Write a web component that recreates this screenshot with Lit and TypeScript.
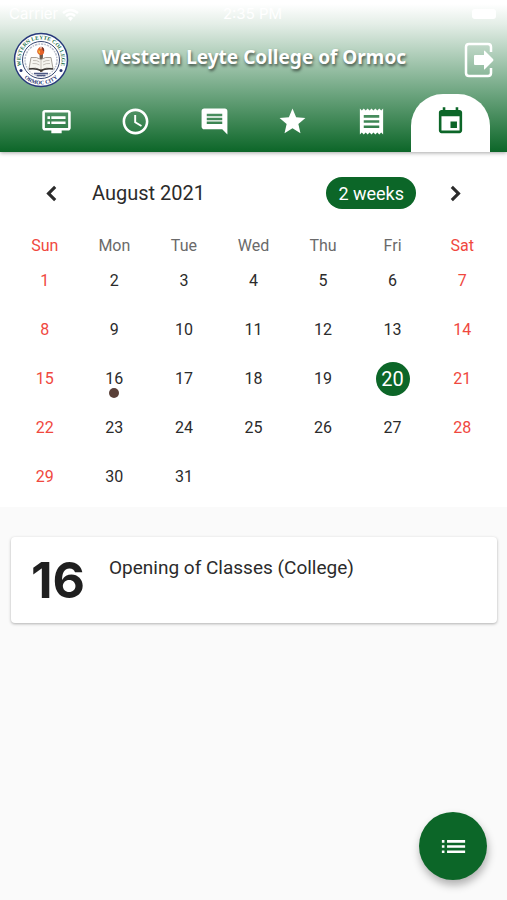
import { LitElement, html, css, svg } from "lit";
import { customElement, property, state } from "lit/decorators.js";
import { classMap } from "lit/directives/class-map.js";

const PATHS: Record<string, string> = {
  dvr: "M21 3H3c-1.1 0-2 .9-2 2v12c0 1.1.9 2 2 2h5v2h8v-2h5c1.1 0 1.99-.9 1.99-2L23 5c0-1.1-.9-2-2-2zm0 14H3V5h18v12zm-2-9H8v2h11V8zm0 4H8v2h11v-2zM7 8H5v2h2V8zm0 4H5v2h2v-2z",
  clock:
    "M11.99 2C6.47 2 2 6.48 2 12s4.47 10 9.99 10C17.52 22 22 17.52 22 12S17.52 2 11.99 2zM12 20c-4.42 0-8-3.58-8-8s3.58-8 8-8 8 3.58 8 8-3.58 8-8 8zm.5-13H11v6l5.25 3.15.75-1.23-4.5-2.67z",
  comment:
    "M21.99 4c0-1.1-.89-2-1.99-2H4c-1.1 0-2 .9-2 2v12c0 1.1.9 2 2 2h14l4 4-.01-18zM18 14H6v-2h12v2zm0-3H6V9h12v2zm0-3H6V6h12v2z",
  star: "M12 17.27L18.18 21l-1.64-7.03L22 9.24l-7.19-.61L12 2 9.19 8.63 2 9.24l5.46 4.73L5.82 21z",
  receipt:
    "M18 17H6v-2h12v2zm0-4H6v-2h12v2zm0-4H6V7h12v2zM3 22l1.5-1.5L6 22l1.5-1.5L9 22l1.5-1.5L12 22l1.5-1.5L15 22l1.5-1.5L18 22l1.5-1.5L21 22V2l-1.5 1.5L18 2l-1.5 1.5L15 2l-1.5 1.5L12 2l-1.5 1.5L9 2 7.5 3.5 6 2 4.5 3.5 3 2v20z",
  event:
    "M17 12h-5v5h5v-5zM16 1v2H8V1H6v2H5c-1.11 0-1.99.9-1.99 2L3 19c0 1.1.89 2 2 2h14c1.1 0 2-.9 2-2V5c0-1.1-.9-2-2-2h-1V1h-2zm3 18H5V8h14v11z",
  left: "M15.7 7.7L14 6l-6 6 6 6 1.7-1.7L11.400 12z",
  right: "M10 6L8.300 7.700 12.600 12l-4.300 4.300L10 18l6-6z",
  list: "M3 13h2v-2H3v2zm0 4h2v-2H3v2zm0-8h2V7H3v2zm4 4h14v-2H7v2zm0 4h14v-2H7v2zM7 7v2h14V7H7z",
};

@customElement("md-icon")
class MdIcon extends LitElement {
  @property() name = "";
  static styles = css`
    :host { display: block; width: 31px; height: 31px; }
    .glyph { display: block; width: 100%; height: 100%; fill: currentColor; }
  `;
  render() {
    return html`<svg class="glyph" viewBox="0 0 24 24" aria-hidden="true">
      ${svg`<path d=${PATHS[this.name]}></path>`}
    </svg>`;
  }
}

@customElement("college-seal")
class CollegeSeal extends LitElement {
  static styles = css`
    :host { display: block; width: 56px; height: 56px; }
    .seal { display: block; width: 100%; height: 100%; }
    .ring { font: bold 11px "Liberation Serif", serif; }
    .top { fill: #23704a; }
    .bottom { fill: #26336f; }
  `;
  render() {
    return html`<svg class="seal" viewBox="0 0 112 112" role="img" aria-label="College seal">
      <defs>
        <path id="arc-top" d="M23 80A41 41 0 1 1 89 80" />
        <path id="arc-bottom" d="M11.300 76A49 49 0 0 0 100.700 76" />
      </defs>
      <circle cx="56" cy="56" r="53" fill="#fff" stroke="#293a7c" stroke-width="3" />
      <circle cx="56" cy="56" r="37" fill="#fff" stroke="#34446f" stroke-width="2" />
      <circle cx="56" cy="56" r="32" fill="none" stroke="#7f88a0" stroke-width="3" stroke-dasharray="3 2 5 2" pathLength="200" opacity=".55" />
      <path d="M28 64h56l-8 17q-20 12-40 0z" fill="#fff" />
      <text class="ring top"><textPath href="#arc-top" startOffset="50%" text-anchor="middle">WESTERN LEYTE COLLEGE</textPath></text>
      <text class="ring bottom"><textPath href="#arc-bottom" startOffset="50%" text-anchor="middle">ORMOC CITY</textPath></text>
      <circle cx="16" cy="77" r="3" fill="#26336f" />
      <circle cx="96" cy="77" r="3" fill="#26336f" />
      <path d="M53 43h7l-1 37h-5z" fill="#6b5a4c" />
      <path d="M55 29q-9 6-6 13 3 5 8 4 7-2 5-10-1-4-4-6 0 3-3 4z" fill="#e5622a" />
      <path d="M57 29q7 3 5 10-4-2-5-10z" fill="#7c3326" />
      <path d="M51 36q4 1 3 7-4-1-3-7z" fill="#f3c63c" />
      <path d="M36 51q12-2 20 4 8-6 20-4l4 22q-14-3-24 3-10-6-24-3z" fill="#f5f4ef" stroke="#8a8279" stroke-width="1.500" />
      <path d="M56 55v21M40 57q8-1 13 3M39 63q8-1 14 3M60 60q6-4 13-3M60 66q6-4 14-3" fill="none" stroke="#b3aea7" stroke-width="1.500" />
      <path d="M32 74q14-2 24 3 10-5 24-3" fill="none" stroke="#373330" stroke-width="3" />
      <path d="M42 83h28M47 87h18" stroke="#4c5884" stroke-width="3" />
    </svg>`;
  }
}

const TABS = [
  ["dvr", "Board"],
  ["clock", "Schedule"],
  ["comment", "Messages"],
  ["star", "Grades"],
  ["receipt", "Receipts"],
  ["event", "Calendar"],
];
const WEEKDAYS = ["Sun", "Mon", "Tue", "Wed", "Thu", "Fri", "Sat"];

@customElement("app-root")
class AppRoot extends LitElement {
  @state() private tab = "event";
  @state() private day = 20;

  static styles = css`
    :host {
      display: flex;
      flex-direction: column;
      min-height: 100vh;
      background: #fafafa;
      color: #2b2b2b;
      font-family: Roboto, "Liberation Sans", sans-serif;
    }
    button {
      font: inherit;
      color: inherit;
      border: 0;
      padding: 0;
      background: none;
      cursor: pointer;
    }
    .top {
      position: relative;
      background: linear-gradient(#fff 4px, #e4eee7 24px, #6fa681 92px, #0c6628 100%);
      box-shadow: 0 1px 4px rgba(0, 0, 0, 0.35);
      color: #fff;
    }
    .status {
      display: grid;
      grid-template-columns: 1fr auto 1fr;
      align-items: center;
      height: 28px;
      padding: 0 11px 0 9px;
      font: 15px/28px Inter, sans-serif;
    }
    .carrier { display: flex; align-items: center; gap: 4px; }
    .wifi { width: 17px; height: 13px; }
    .battery {
      justify-self: end;
      width: 24px;
      height: 10px;
      border-radius: 3px;
      background: #fff;
    }
    .bar {
      display: grid;
      grid-template-columns: 56px 1fr 56px;
      align-items: center;
      height: 64px;
      padding: 0 12px 0 13px;
    }
    .title {
      margin: 0;
      padding-bottom: 6px;
      text-align: center;
      font: bold 19px/28px "Noto Sans", sans-serif;
      text-shadow: 1px 2px 3px rgba(0, 0, 0, 0.6);
    }
    .exit { justify-self: end; width: 31px; height: 38px; }
    .exit-icon { display: block; width: 31px; height: 38px; }
    .tabs { display: flex; padding: 2px 17px 0; }
    .tab {
      flex: 1;
      display: flex;
      justify-content: center;
      height: 58px;
      padding-top: 12px;
    }
    .tab.active {
      background: #fff;
      color: #0c6628;
      border-radius: 32px 32px 0 0;
    }
    .calendar { background: #fff; padding: 0 10px 6px; }
    .month {
      display: flex;
      align-items: center;
      height: 82px;
      padding: 0 26px;
    }
    .step { width: 31px; height: 31px; }
    .name { flex: 1; margin: 0; padding-left: 25px; font-size: 20px; font-weight: 400; line-height: 24px; }
    .range {
      height: 32px;
      padding: 0 12px;
      border-radius: 16px;
      background: #0c6628;
      color: #fff;
      font-size: 18px;
      margin-right: 24px;
    }
    .days { width: 100%; table-layout: fixed; border-collapse: collapse; font-size: 16px; text-align: center; }
    .days th { height: 22px; padding: 0; font-weight: 400; color: #6a6a6a; }
    .days td { height: 49px; padding: 0; }
    .days .weekend { color: #f0483e; }
    .day { position: relative; width: 34px; height: 34px; border-radius: 50%; }
    .day.active { background: #0c6628; color: #fff; font-size: 20px; }
    .dot {
      position: absolute;
      left: 12px;
      bottom: -2px;
      width: 10px;
      height: 10px;
      border-radius: 50%;
      background: #5a4038;
    }
    .events { list-style: none; margin: 0; padding: 30px 10px 10px 11px; }
    .event {
      display: flex;
      align-items: flex-start;
      gap: 24px;
      min-height: 86px;
      box-sizing: border-box;
      padding: 18px 20px 16px;
      border-radius: 4px;
      background: #fff;
      box-shadow: 0 1px 3px rgba(0, 0, 0, 0.3);
    }
    .date { color: #1f1f1f; font: bold 50px/50px Inter, sans-serif; }
    .what { font-size: 19px; line-height: 26px; }
    .fab {
      position: fixed;
      right: 20px;
      bottom: 20px;
      display: grid;
      place-items: center;
      width: 68px;
      height: 68px;
      border-radius: 50%;
      background: #0c6628;
      color: #fff;
      box-shadow: 1px 5px 9px rgba(0, 0, 0, 0.3);
    }
  `;

  private cell(n: number, col: number) {
    if (n > 31) return html`<td></td>`;
    return html`<td class=${classMap({ weekend: col === 0 || col === 6 })}>
      <button class=${classMap({ day: true, active: n === this.day })} @click=${() => (this.day = n)}>
        ${n}${n === 16 ? html`<span class="dot"></span>` : ""}
      </button>
    </td>`;
  }

  render() {
    return html`
      <header class="top">
        <div class="status">
          <span class="carrier">Carrier
            <svg class="wifi" viewBox="0 0 17 13" aria-hidden="true">
              <path d="M1 5q7.500-6 15 0M4 8q4.500-4 9 0" fill="none" stroke="#fff" stroke-width="2.500" />
              <path d="M6 10q2.500-2 5 0l-2.500 3z" fill="#fff" />
            </svg>
          </span>
          <span>2:35 PM</span>
          <span class="battery"></span>
        </div>
        <div class="bar">
          <college-seal></college-seal>
          <h1 class="title">Western Leyte College of Ormoc</h1>
          <button class="exit" aria-label="Log out">
            <svg class="exit-icon" viewBox="0 0 31 38" aria-hidden="true">
              <path d="M27 11V6q0-3-3-3H5Q2 3 2 6v26q0 3 3 3h19q3 0 3-3v-5" fill="none" stroke="#fff" stroke-width="2.500" />
              <path d="M10 15q0-1 1-1h9v-4q0-1 1 0l8 8q1 1 0 2l-8 8q-1 1-1 0v-4h-9q-1 0-1-1z" fill="#fff" />
            </svg>
          </button>
        </div>
        <nav class="tabs">
          ${TABS.map(
            ([icon, label]) => html`<button
              class=${classMap({ tab: true, active: icon === this.tab })}
              aria-label=${label}
              @click=${() => (this.tab = icon)}
            ><md-icon name=${icon}></md-icon></button>`
          )}
        </nav>
      </header>
      <section class="calendar">
        <div class="month">
          <button class="step" aria-label="Previous month"><md-icon name="left"></md-icon></button>
          <h2 class="name">August 2021</h2>
          <button class="range">2 weeks</button>
          <button class="step" aria-label="Next month"><md-icon name="right"></md-icon></button>
        </div>
        <table class="days">
          <thead>
            <tr>
              ${WEEKDAYS.map((d, i) => html`<th scope="col" class=${classMap({ weekend: i === 0 || i === 6 })}>${d}</th>`)}
            </tr>
          </thead>
          <tbody>
            ${[0, 1, 2, 3, 4].map((w) => html`<tr>${WEEKDAYS.map((_, i) => this.cell(w * 7 + i + 1, i))}</tr>`)}
          </tbody>
        </table>
      </section>
      <ul class="events">
        <li class="event">
          <span class="date">16</span>
          <span class="what">Opening of Classes (College)</span>
        </li>
      </ul>
      <button class="fab" aria-label="Show list"><md-icon name="list"></md-icon></button>
    `;
  }
}
